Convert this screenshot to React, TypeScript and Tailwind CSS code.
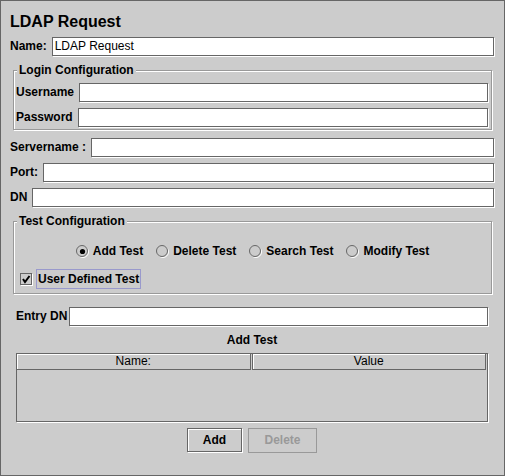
type FieldProps = {
  value?: string;
};

function Field({ value = "" }: FieldProps) {
  return (
    <div className="flex-1 h-[19px] border border-[#666666] bg-white shadow-[1px_1px_0_#ffffff] px-[2px] text-[12px] font-normal leading-[17px] whitespace-nowrap overflow-hidden">
      {value}
    </div>
  );
}

function Row({ label, value, tight }: { label: string; value?: string; tight?: boolean }) {
  return (
    <div className={tight ? "flex items-center gap-[2px] h-[19px]" : "flex items-center gap-[5px] h-[19px]"}>
      <span className="text-[12px] font-bold leading-[19px] whitespace-nowrap">{label}</span>
      <Field value={value} />
    </div>
  );
}

function Radio({ label, checked }: { label: string; checked?: boolean }) {
  return (
    <div className="flex items-center gap-[4px]">
      <svg width="13" height="13" viewBox="0 0 13 13">
        <circle cx="7" cy="7" r="5.5" fill="none" stroke="#ffffff" strokeWidth="1" />
        <circle cx="6" cy="6" r="5.5" fill="#cccccc" stroke="#666666" strokeWidth="1" />
        {checked && <circle cx="6.5" cy="6.5" r="2.6" fill="#000000" />}
      </svg>
      <span className="text-[12px] font-bold leading-[17px] whitespace-nowrap">{label}</span>
    </div>
  );
}

function Group({ title, children }: { title: string; children: React.ReactNode }) {
  return (
    <div className="ml-[3px] mr-[2px] flex flex-col border border-[#999999] shadow-[1px_1px_0_#ffffff,inset_1px_1px_0_#ffffff]">
      <div className="-mt-[8px] ml-[3px] w-fit bg-[#cccccc] px-[2px] h-[14px] text-[12px] font-bold leading-[14px]">
        {title}
      </div>
      {children}
    </div>
  );
}

export default function App() {
  return (
    <div className="w-[505px] h-[476px] bg-[#cccccc] border border-[#666666] pl-[9px] pr-[10px] pt-[11px] text-black font-['Liberation_Sans',Arial,sans-serif] flex flex-col overflow-hidden">
      {/* Title */}
      <h1 className="text-[16px] font-bold leading-[19px] h-[19px]">LDAP Request</h1>

      <div className="mt-[6px]">
        <Row label="Name:" value="LDAP Request" />
      </div>

      {/* Login Configuration */}
      <div className="mt-[14px]">
        <Group title="Login Configuration">
          <div className="mt-[6px] pl-[2px] pr-[3px] flex flex-col gap-[6px] pb-[2px]">
            <Row label="Username" />
            <Row label="Password" />
          </div>
        </Group>
      </div>

      <div className="mt-[8px] flex flex-col gap-[6px]">
        <Row label="Servername :" />
        <Row label="Port:" />
        <Row label="DN" />
      </div>

      {/* Test Configuration */}
      <div className="mt-[14px]">
        <Group title="Test Configuration">
          <div className="mt-[15px] h-[17px] flex items-center justify-center gap-[13px]">
            <Radio label="Add Test" checked />
            <Radio label="Delete Test" />
            <Radio label="Search Test" />
            <Radio label="Modify Test" />
          </div>
          <div className="mt-[9px] h-[20px] pl-[6px] flex items-center gap-[3px] mb-[4px]">
            <svg width="13" height="13" viewBox="0 0 13 13">
              <rect x="1.5" y="1.5" width="11" height="11" fill="none" stroke="#ffffff" />
              <rect x="0.5" y="0.5" width="11" height="11" fill="#cccccc" stroke="#666666" />
              <path d="M3 6 L5 9 L9.5 3" fill="none" stroke="#000000" strokeWidth="2" />
            </svg>
            <span className="h-[20px] border border-[#9999cc] px-[1px] text-[12px] font-bold leading-[18px] whitespace-nowrap">
              User Defined Test
            </span>
          </div>
        </Group>
      </div>

      {/* Entry DN + table */}
      <div className="mt-[13px] px-[6px] flex flex-col">
        <Row label="Entry DN" tight />
        <div className="mt-[7px] h-[14px] text-center text-[12px] font-bold leading-[14px]">Add Test</div>
        <div className="mt-[6px] h-[69px] border border-[#666666] shadow-[1px_1px_0_#ffffff] flex flex-col">
          <div className="flex h-[16px] text-[12px] font-normal leading-[14px]">
            <div className="flex-1 text-center border-r border-b border-[#666666] shadow-[inset_1px_1px_0_#ffffff]">Name:</div>
            <div className="ml-[1px] mr-[1px] flex-1 text-center border-l border-r border-b border-[#666666] shadow-[inset_1px_1px_0_#ffffff]">Value</div>
          </div>
        </div>
      </div>

      {/* Buttons */}
      <div className="mt-[6px] flex justify-center gap-[6px]">
        <button className="w-[55px] h-[24px] border border-[#666666] shadow-[1px_1px_0_#ffffff,inset_1px_1px_0_#ffffff] bg-[#cccccc] text-[12px] font-bold leading-[22px]">
          Add
        </button>
        <button className="w-[69px] h-[25px] border border-[#999999] bg-[#cccccc] text-[12px] font-bold text-[#999999] leading-[23px]">
          Delete
        </button>
      </div>
    </div>
  );
}
